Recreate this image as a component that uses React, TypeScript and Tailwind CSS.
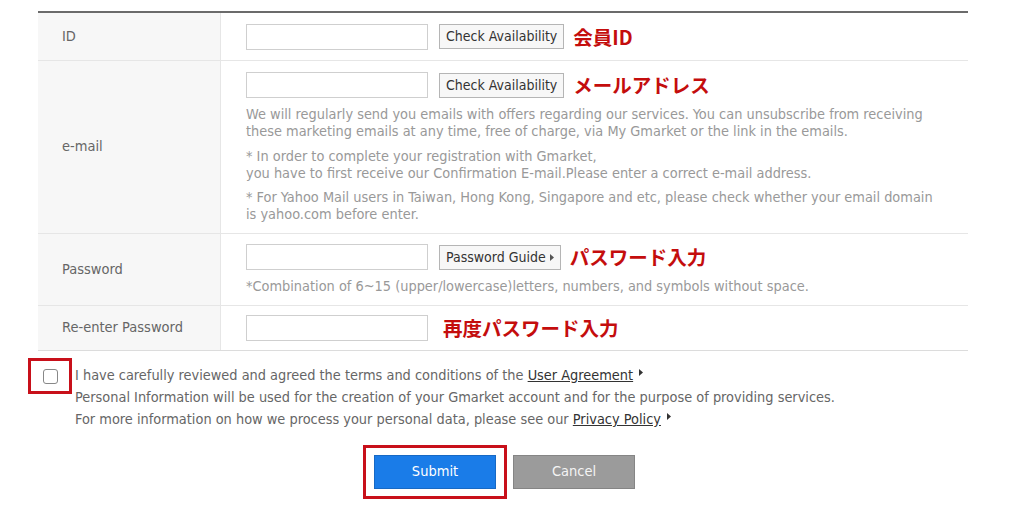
import React from "react";

const F = { fontFamily: '"DejaVu Sans Condensed", "DejaVu Sans", "Noto Sans CJK JP", sans-serif' };
const JP = { fontFamily: '"Noto Sans CJK JP", sans-serif' };

function Tri({ className = "", color = "#333" }: { className?: string; color?: string }) {
  return (
    <svg width="4" height="7" viewBox="0 0 4 7" className={className}>
      <path d="M0 0 L4 3.5 L0 7 Z" fill={color} />
    </svg>
  );
}

function Input() {
  return <div className="w-[182px] h-[26px] border border-[#cfcfcf] bg-white shrink-0" />;
}

function Btn({ children }: { children: React.ReactNode }) {
  return (
    <div className="ml-[11px] h-[25px] px-[6px] flex items-center gap-[4px] border border-[#b5b5b5] bg-[#f7f7f7] text-[14px] text-[#333] shrink-0">
      {children}
    </div>
  );
}

function Red({ children, className = "ml-[9px]" }: { children: React.ReactNode; className?: string }) {
  return (
    <span style={JP} className={`text-[19.5px] font-bold text-[#c40d0d] leading-none ${className}`}>
      {children}
    </span>
  );
}

function Row({ label, children, last }: { label: string; children: React.ReactNode; last?: boolean }) {
  return (
    <div className={`grid grid-cols-[183px_1fr] ${last ? "border-b border-[#dcdcdc]" : "border-b border-[#e6e6e6]"}`}>
      <div className="bg-[#f7f7f7] border-r border-[#e6e6e6] flex items-center pl-[24px] text-[14.5px] text-[#666]">
        {label}
      </div>
      <div className="pl-[25px]">{children}</div>
    </div>
  );
}

export default function App() {
  return (
    <div style={F} className="w-[1024px] h-[513px] bg-white overflow-hidden">
      <div className="pt-[11px] pl-[38px] w-[968px]">
        <div className="border-t-2 border-[#6b6b6b]">
          <Row label="ID">
            <div className="h-[47px] flex items-center">
              <Input />
              <Btn>Check Availability</Btn>
              <Red>会員ID</Red>
            </div>
          </Row>
          <Row label="e-mail">
            <div className="pt-[11px] pb-[10px]">
              <div className="flex items-center">
                <Input />
                <Btn>Check Availability</Btn>
                <Red>メールアドレス</Red>
              </div>
              <div className="mt-[8px] text-[14.4px] leading-[17px] text-[#999]">
                <p>We will regularly send you emails with offers regarding our services. You can unsubscribe from receiving<br />these marketing emails at any time, free of charge, via My Gmarket or the link in the emails.</p>
                <p className="mt-[8px]">* In order to complete your registration with Gmarket,<br />you have to first receive our Confirmation E-mail.Please enter a correct e-mail address.</p>
                <p className="mt-[7px]">* For Yahoo Mail users in Taiwan, Hong Kong, Singapore and etc, please check whether your email domain<br />is yahoo.com before enter.</p>
              </div>
            </div>
          </Row>
          <Row label="Password">
            <div className="pt-[10px] pb-[10px]">
              <div className="flex items-center">
                <Input />
                <Btn>
                  Password Guide <Tri color="#555" />
                </Btn>
                <Red>パスワード入力</Red>
              </div>
              <div className="mt-[8px] text-[14.4px] leading-[17px] text-[#999]">
                *Combination of 6~15 (upper/lowercase)letters, numbers, and symbols without space.
              </div>
            </div>
          </Row>
          <Row label="Re-enter Password" last>
            <div className="h-[44px] flex items-center">
              <Input />
              <Red className="ml-[15px]">再度パスワード入力</Red>
            </div>
          </Row>
        </div>
      </div>

      <div className="flex pl-[28px] pt-[7px]">
        <div className="w-[44px] h-[36px] border-[3px] border-[#c8101a] flex items-center justify-center shrink-0">
          <div className="w-[15px] h-[15px] border border-[#888] rounded-[3px] bg-white" />
        </div>
        <div className="pl-[3px] pt-[6px] text-[14.4px] leading-[22px] text-[#666]">
          <div className="flex items-center gap-[6px]">
            <span>
              I have carefully reviewed and agreed the terms and conditions of the{" "}
              <span className="underline text-[#333]">User Agreement</span>
            </span>
            <Tri className="-mt-[6px]" />
          </div>
          <div>Personal Information will be used for the creation of your Gmarket account and for the purpose of providing services.</div>
          <div className="flex items-center gap-[6px]">
            <span>
              For more information on how we process your personal data, please see our{" "}
              <span className="underline text-[#333]">Privacy Policy</span>
            </span>
            <Tri className="-mt-[6px]" />
          </div>
        </div>
      </div>

      <div className="flex pl-[363px] pt-[15px]">
        <div className="flex items-start gap-[6px]">
          <div className="w-[144px] h-[54px] border-[3px] border-[#c8101a] flex items-center justify-center">
            <div className="w-[122px] h-[34px] bg-[#1a7ce8] border border-[#1769c4] flex items-center justify-center text-white text-[14.5px]">
              Submit
            </div>
          </div>
          <div className="mt-[10px] w-[122px] h-[34px] bg-[#9b9b9b] border border-[#858585] flex items-center justify-center text-[#f4f4f4] text-[14.5px]">
            Cancel
          </div>
        </div>
      </div>
    </div>
  );
}
